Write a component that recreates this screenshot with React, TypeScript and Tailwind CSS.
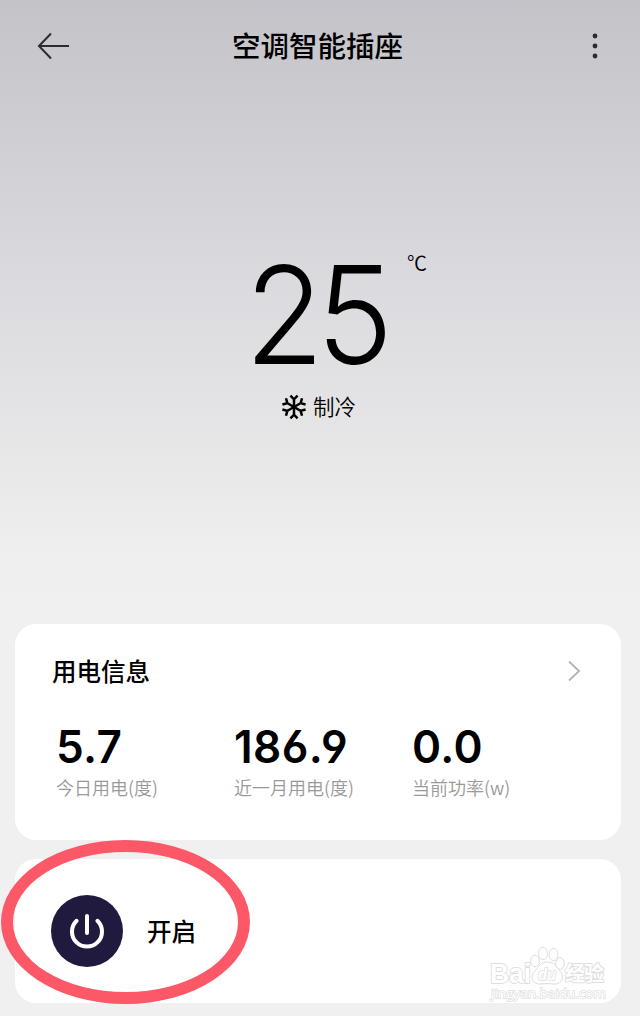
import React from 'react';

const CJK = "font-['Noto_Sans_CJK_SC',sans-serif]";

const stats = [
  { value: '5.7', label: '今日用电(度)' },
  { value: '186.9', label: '近一月用电(度)' },
  { value: '0.0', label: '当前功率(w)' },
];

const SnowflakeIcon: React.FC = () => (
  <svg width="26" height="26" viewBox="-13 -13 26 26" fill="none" stroke="#000" strokeWidth="2.5">
    {[0, 60, 120, 180, 240, 300].map((deg) => (
      <g key={deg} transform={`rotate(${deg})`}>
        <path d="M0 0V-9M-3.600 -11.300L0 -7.700L3.600 -11.300" />
      </g>
    ))}
  </svg>
);

const Header: React.FC = () => (
  <header className="grid h-[92px] grid-cols-[1fr_auto_1fr] items-center pl-[37px] pr-[42px]">
    <svg width="32" height="28" viewBox="0 0 32 28" fill="none" stroke="#2b2b31" strokeWidth="2">
      <path d="M14 1.5L2 14L14 26.5M2 14H32" />
    </svg>
    <h1 className="-mt-[2px] text-[28.5px] font-medium leading-none text-black">空调智能插座</h1>
    <svg className="-mr-[2px] justify-self-end" width="10" height="28" viewBox="0 0 10 28" fill="#2b2b31">
      <circle cx="5" cy="4" r="2.4" />
      <circle cx="5" cy="14" r="2.4" />
      <circle cx="5" cy="24" r="2.4" />
    </svg>
  </header>
);

const Temperature: React.FC = () => (
  <section className="flex h-[532px] flex-col items-center pt-[156px]">
    <div className="relative flex h-[132px] w-[140px] items-center justify-center">
      <span className="mr-[9px] mt-[1px] inline-block scale-x-[0.95] font-['Inter',sans-serif] text-[136px] font-light leading-[132px] tracking-[-8px] text-black">
        25
      </span>
      <span className="absolute left-[157px] top-[5px] text-[20px] font-[350] leading-none text-black">℃</span>
    </div>
    <div className="mt-[14px] flex items-center gap-[6px] pr-[3px]">
      <SnowflakeIcon />
      <span className="-mt-[2px] text-[21.5px] font-[350] leading-[26px] text-black">制冷</span>
    </div>
  </section>
);

const UsageCard: React.FC = () => (
  <section className="h-[216px] rounded-[21px] bg-white pl-[37px] pr-[40px] pt-[32px]">
    <div className="flex h-[30px] items-center justify-between">
      <h2 className="text-[24.5px] font-medium leading-none text-black">用电信息</h2>
      <svg width="14" height="22" viewBox="0 0 14 22" fill="none" stroke="#b3b3b3" strokeWidth="1.8">
        <path d="M2 1.5L12 11L2 20.5" />
      </svg>
    </div>
    <div className="mt-[38px] grid grid-cols-[178px_178px_1fr] pl-[4px]">
      {stats.map((s) => (
        <div key={s.label}>
          <div className="origin-left scale-x-[0.97] font-['Inter',sans-serif] text-[45.5px] font-semibold leading-[46px] tracking-[0.4px] text-black [font-feature-settings:'ss01']">
            {s.value}
          </div>
          <div className="mt-[6px] whitespace-nowrap text-[18px] font-[350] leading-[22px] text-[#999]">
            {s.label}
          </div>
        </div>
      ))}
    </div>
  </section>
);

const Watermark: React.FC = () => (
  <svg className="absolute right-[14px] top-[86px]" width="118" height="58" viewBox="489 945 118 58">
    <g fill="#fff" stroke="#dedede" strokeWidth="1" strokeLinejoin="round">
      <text x="490" y="983" fontFamily="Liberation Sans" fontWeight="bold" fontSize="27" textLength="41" lengthAdjust="spacingAndGlyphs" strokeWidth="1.800" paintOrder="stroke">
        Bai
      </text>
      <text x="565" y="981" fontFamily="Noto Sans CJK SC" fontWeight="bold" fontSize="20" textLength="39" strokeWidth="1.800" paintOrder="stroke">
        经验
      </text>
      <ellipse cx="535" cy="961" rx="4.3" ry="5.8" />
      <ellipse cx="543" cy="953.5" rx="4.5" ry="6.2" />
      <ellipse cx="553.5" cy="954.5" rx="4.5" ry="6.2" />
      <ellipse cx="560" cy="963.5" rx="4.3" ry="5.8" />
      <path d="M547.500 962C540 962 539 967 535 971C529 977 533 985 541 984C545 983.500 549 983.500 553 984C562 985 565 977 560 971C556 967 555 962 547.500 962Z" />
      <text x="538" y="980" fontFamily="Liberation Sans" fontWeight="bold" fontStyle="italic" fontSize="16" textLength="18" lengthAdjust="spacingAndGlyphs" strokeWidth="1.600" paintOrder="stroke">
        du
      </text>
    </g>
    <text x="491" y="998" fontFamily="Open Sans" fontSize="13.500" fill="#fff" stroke="#dedede" strokeWidth="1.400" paintOrder="stroke" textLength="115">
      jingyan.baidu.com
    </text>
  </svg>
);

const PowerCard: React.FC = () => (
  <section className="relative mt-[19px] flex h-[144px] items-center rounded-[21px] bg-white pl-[36px]">
    <button className="flex size-[72px] items-center justify-center rounded-full bg-[#211a3f]">
      <svg width="38" height="38" viewBox="-19 -19 38 38" fill="none" stroke="#fff" strokeWidth="4" strokeLinecap="round">
        <path d="M0 -15V2M-10.400 -10.200A15 15 0 1 0 10.400 -10.200" />
      </svg>
    </button>
    <span className="ml-[24px] text-[24.5px] font-medium leading-none text-black">开启</span>
    <Watermark />
    <div className="absolute left-[-14px] top-[-19px] h-[164px] w-[249px] rounded-[50%] border-[12px] border-[#fd5868]" />
  </section>
);

const App: React.FC = () => (
  <div
    className={`h-[1016px] w-[640px] overflow-hidden bg-[#f0f0f0] bg-[linear-gradient(180deg,#c4c3c9_0px,#cccbd0_100px,#d9d8dd_260px,#e3e3e5_400px,#efefef_560px,#f0f0f0_620px)] ${CJK}`}
  >
    <Header />
    <Temperature />
    <main className="pl-[15px] pr-[19px]">
      <UsageCard />
      <PowerCard />
    </main>
  </div>
);

export default App;
